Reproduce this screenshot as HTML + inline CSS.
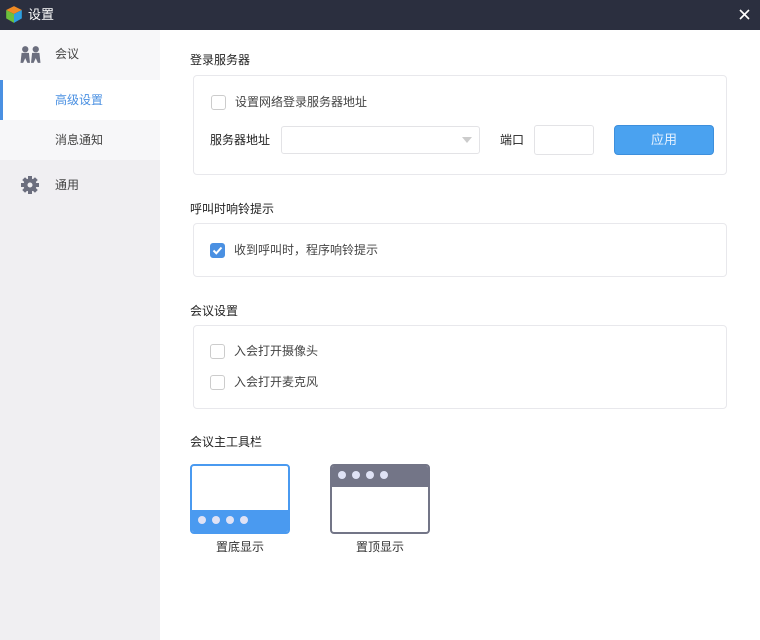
<!DOCTYPE html><html><head><meta charset="utf-8"><style>
*{margin:0;padding:0;box-sizing:border-box}
body{width:760px;height:640px;position:relative;overflow:hidden;background:#fff;font-family:"Liberation Sans","Noto Sans CJK SC",sans-serif;font-size:12px;color:#333;line-height:14px}
.a{position:absolute}
.title{left:0;top:0;width:760px;height:30px;background:#2b2f3f;color:#fff}
.side{left:0;top:30px;width:160px;height:610px;background:#f0eff2}
.cb{width:15px;height:15px;border:1px solid #ccc;border-radius:3px;background:#fff}
.box{border:1px solid #e8e8ec;border-radius:4px;background:#fff}
.h{font-size:12px;color:#222}
.dot{display:inline-block;width:8px;height:8px;border-radius:50%;background:#dfe2f5;margin-right:6px}
</style></head><body>
<div class="a title">
<svg class="a" style="left:5px;top:5px" width="18" height="19" viewBox="0 0 16 17"><path d="M8 1L15 4.5L8 8L1 4.5Z" fill="#f08a24"/><path d="M1 4.5L8 8V16L1 12Z" fill="#6cbf3c"/><path d="M15 4.5L8 8V16L15 12Z" fill="#2d9fe0"/></svg>
<div class="a" style="left:28px;top:8px;font-size:13px">设置</div>
<svg class="a" style="left:739px;top:9px" width="11" height="11" viewBox="0 0 11 11"><path d="M1 1L10 10M10 1L1 10" stroke="#fff" stroke-width="1.6"/></svg>
</div>
<div class="a side">
<div class="a" style="left:0;top:0;width:160px;height:130px;background:#f7f7f9"></div>
<div class="a" style="left:0;top:50px;width:160px;height:40px;background:#fff"></div>
<div class="a" style="left:0;top:50px;width:3px;height:40px;background:#4a90e2"></div>
<svg class="a" style="left:20px;top:16px" width="21" height="18" viewBox="0 0 20 17"><circle cx="5" cy="3" r="3" fill="#6b6e7e"/><circle cx="15" cy="3" r="3" fill="#6b6e7e"/><path d="M0.5 16L1.5 6.5H8.5L9.5 16H7L5 11.5L3 16Z M10.5 16L11.5 6.5H18.5L19.5 16H17L15 11.5L13 16Z" fill="#6b6e7e"/></svg>
<div class="a" style="left:55px;top:17px;color:#444">会议</div>
<div class="a" style="left:55px;top:63px;color:#4a90e2">高级设置</div>
<div class="a" style="left:55px;top:103px;color:#444">消息通知</div>
<svg class="a" style="left:21px;top:146px" width="18" height="18" viewBox="0 0 18 18"><circle cx="9" cy="9" r="6.5" fill="#6b6e7e"/><g fill="#6b6e7e"><rect x="7" y="0" width="4" height="4"/><rect x="7" y="14" width="4" height="4"/><rect x="0" y="7" width="4" height="4"/><rect x="14" y="7" width="4" height="4"/><rect x="7" y="0" width="4" height="4" transform="rotate(45 9 9)"/><rect x="7" y="14" width="4" height="4" transform="rotate(45 9 9)"/><rect x="0" y="7" width="4" height="4" transform="rotate(45 9 9)"/><rect x="14" y="7" width="4" height="4" transform="rotate(45 9 9)"/></g><circle cx="9" cy="9" r="2.5" fill="#f0eff2"/></svg>
<div class="a" style="left:55px;top:148px;color:#444">通用</div>
</div>
<div class="a h" style="left:190px;top:53px">登录服务器</div>
<div class="a box" style="left:193px;top:75px;width:534px;height:100px"></div>
<div class="a cb" style="left:211px;top:95px"></div>
<div class="a" style="left:235px;top:95px;color:#444">设置网络登录服务器地址</div>
<div class="a" style="left:210px;top:133px;color:#222">服务器地址</div>
<div class="a" style="left:281px;top:126px;width:199px;height:28px;border:1px solid #e3e3e6;border-radius:3px"></div>
<div class="a" style="left:462px;top:137px;width:0;height:0;border-left:5px solid transparent;border-right:5px solid transparent;border-top:6px solid #ccc"></div>
<div class="a" style="left:500px;top:133px;color:#222">端口</div>
<div class="a" style="left:534px;top:125px;width:60px;height:30px;border:1px solid #e3e3e6;border-radius:3px"></div>
<div class="a" style="left:614px;top:125px;width:100px;height:30px;background:#4aa2f0;border:1px solid #3d8fdc;border-radius:4px;color:#e6f2ff;text-align:center;line-height:28px;font-size:13px">应用</div>
<div class="a h" style="left:190px;top:202px">呼叫时响铃提示</div>
<div class="a box" style="left:193px;top:223px;width:534px;height:54px"></div>
<div class="a cb" style="left:210px;top:243px;background:#4a90e2;border-color:#4a90e2"><svg width="13" height="13" viewBox="0 0 13 13" style="position:absolute;left:0;top:0"><path d="M2.5 6.5L5.3 9.3L10.5 3.5" stroke="#fff" stroke-width="2" fill="none"/></svg></div>
<div class="a" style="left:234px;top:243px;color:#444">收到呼叫时，程序响铃提示</div>
<div class="a h" style="left:190px;top:304px">会议设置</div>
<div class="a box" style="left:193px;top:325px;width:534px;height:84px"></div>
<div class="a cb" style="left:210px;top:344px"></div>
<div class="a" style="left:234px;top:344px;color:#444">入会打开摄像头</div>
<div class="a cb" style="left:210px;top:375px"></div>
<div class="a" style="left:234px;top:375px;color:#444">入会打开麦克风</div>
<div class="a h" style="left:190px;top:435px">会议主工具栏</div>
<div class="a" style="left:190px;top:464px;width:100px;height:70px;border:2px solid #4a9af0;border-radius:4px;overflow:hidden"><div class="a" style="left:0;bottom:0;width:100%;height:22px;background:#4a9af0;padding:6px 0 0 6px;line-height:8px"><span class="dot"></span><span class="dot"></span><span class="dot"></span><span class="dot"></span></div></div>
<div class="a" style="left:216px;top:540px;color:#333">置底显示</div>
<div class="a" style="left:330px;top:464px;width:100px;height:70px;border:2px solid #737587;border-radius:4px;overflow:hidden"><div class="a" style="left:0;top:0;width:100%;height:21px;background:#737587;padding:5px 0 0 6px;line-height:8px"><span class="dot"></span><span class="dot"></span><span class="dot"></span><span class="dot"></span></div></div>
<div class="a" style="left:356px;top:540px;color:#333">置顶显示</div>
</body></html>
